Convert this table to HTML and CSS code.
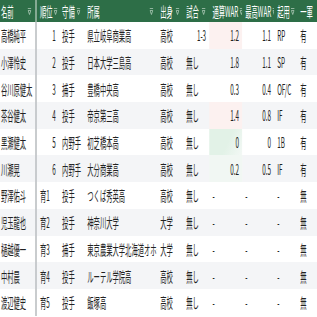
FILE: index.html
```html
<!DOCTYPE html>
<html lang="ja">
<head>
<meta charset="utf-8">
<link rel="stylesheet" href="styles.css">
</head>
<body>
<div class="sheet">
  <div class="row head">
    <div class="c c1">名前<svg class="f" viewBox="0 0 8 7"><path d="M0 0.5h8M1 2.5h6l-3 4z"/></svg></div>
    <div class="c">順位<svg class="f" viewBox="0 0 8 7"><path d="M0 0.5h8M1 2.5h6l-3 4z"/></svg></div>
    <div class="c">守備<svg class="f" viewBox="0 0 8 7"><path d="M0 0.5h8M1 2.5h6l-3 4z"/></svg></div>
    <div class="c">所属<svg class="f" viewBox="0 0 8 7"><path d="M0 0.5h8M1 2.5h6l-3 4z"/></svg></div>
    <div class="c">出身<svg class="f" viewBox="0 0 8 7"><path d="M0 0.5h8M1 2.5h6l-3 4z"/></svg></div>
    <div class="c">試合<svg class="f" viewBox="0 0 8 7"><path d="M0 0.5h8M1 2.5h6l-3 4z"/></svg></div>
    <div class="c">通算WAR<svg class="f" viewBox="0 0 8 7"><path d="M0 0.5h8M1 2.5h6l-3 4z"/></svg></div>
    <div class="c">最高WAR<svg class="f" viewBox="0 0 8 7"><path d="M0 0.5h8M1 2.5h6l-3 4z"/></svg></div>
    <div class="c">起用<svg class="f" viewBox="0 0 8 7"><path d="M0 0.5h8M1 2.5h6l-3 4z"/></svg></div>
    <div class="c">一軍</div>
  </div>

  <div class="row">
    <div class="c c1">高橋純平</div><div class="c n">1</div><div class="c">投手</div><div class="c">県立岐阜商業高</div><div class="c">高校</div><div class="c n">1-3</div><div class="c n war-p">1.2</div><div class="c n">1.1</div><div class="c">RP</div><div class="c">有</div>
  </div>
  <div class="row alt">
    <div class="c c1">小澤怜史</div><div class="c n">2</div><div class="c">投手</div><div class="c">日本大学三島高</div><div class="c">高校</div><div class="c">無し</div><div class="c n">1.8</div><div class="c n">1.1</div><div class="c">SP</div><div class="c">有</div>
  </div>
  <div class="row">
    <div class="c c1">谷川原健太</div><div class="c n">3</div><div class="c">捕手</div><div class="c">豊橋中央高</div><div class="c">高校</div><div class="c">無し</div><div class="c n">0.3</div><div class="c n">0.4</div><div class="c">OF/C</div><div class="c">有</div>
  </div>
  <div class="row alt">
    <div class="c c1">茶谷健太</div><div class="c n">4</div><div class="c">投手</div><div class="c">帝京第三高</div><div class="c">高校</div><div class="c">無し</div><div class="c n war-p">1.4</div><div class="c n">0.8</div><div class="c">IF</div><div class="c">有</div>
  </div>
  <div class="row">
    <div class="c c1">黒瀬健太</div><div class="c n">5</div><div class="c">内野手</div><div class="c">初芝橋本高</div><div class="c">高校</div><div class="c">無し</div><div class="c n war-g">0</div><div class="c n">0</div><div class="c">1B</div><div class="c">有</div>
  </div>
  <div class="row alt">
    <div class="c c1">川瀬晃</div><div class="c n">6</div><div class="c">内野手</div><div class="c">大分商業高</div><div class="c">高校</div><div class="c">無し</div><div class="c n war-l">0.2</div><div class="c n">0.5</div><div class="c">IF</div><div class="c">有</div>
  </div>
  <div class="row">
    <div class="c c1">野澤佑斗</div><div class="c">育1</div><div class="c">投手</div><div class="c">つくば秀英高</div><div class="c">高校</div><div class="c">無し</div><div class="c">-</div><div class="c">-</div><div class="c">-</div><div class="c">無</div>
  </div>
  <div class="row alt">
    <div class="c c1">児玉龍也</div><div class="c">育2</div><div class="c">投手</div><div class="c">神奈川大学</div><div class="c">大学</div><div class="c">無し</div><div class="c">-</div><div class="c">-</div><div class="c">-</div><div class="c">無</div>
  </div>
  <div class="row">
    <div class="c c1">樋越優一</div><div class="c">育3</div><div class="c">捕手</div><div class="c">東京農業大学北海道オホーツク</div><div class="c">大学</div><div class="c">無し</div><div class="c">-</div><div class="c">-</div><div class="c">-</div><div class="c">無</div>
  </div>
  <div class="row alt">
    <div class="c c1">中村晨</div><div class="c">育4</div><div class="c">投手</div><div class="c">ルーテル学院高</div><div class="c">高校</div><div class="c">無し</div><div class="c">-</div><div class="c">-</div><div class="c">-</div><div class="c">無</div>
  </div>
  <div class="row">
    <div class="c c1">渡辺健史</div><div class="c">育5</div><div class="c">投手</div><div class="c">飯塚高</div><div class="c">高校</div><div class="c">無し</div><div class="c">-</div><div class="c">-</div><div class="c">-</div><div class="c">無</div>
  </div>
</div>
</body>
</html>
```

FILE: styles.css
```css
html, body {
  margin: 0;
  padding: 0;
  background: #ffffff;
  overflow: hidden;
}
.sheet {
  width: 705px;
  transform: scaleX(0.45);
  transform-origin: 0 0;
  font-family: "Noto Sans CJK JP", "Noto Sans", sans-serif;
  font-size: 14px;
  color: #222222;
}
.row {
  display: grid;
  grid-template-columns: 82px 49px 56px 162px 58px 58px 73px 71px 51px 45px;
  height: 26.7px;
  background: #ffffff;
}
.row.alt {
  background: #f4f5f7;
}
.row.head {
  height: 22px;
  background: #2d6e47;
  color: #ffffff;
}
.c {
  display: flex;
  align-items: center;
  padding: 0 0 0 7px;
  white-space: nowrap;
  overflow: hidden;
  min-width: 0;
}
.c.n {
  justify-content: flex-end;
  padding: 0 7px 0 0;
}
.c1 {
  padding-left: 2px;
  border-right: 4px solid #c4c7c9;
}
.head .c1 {
  border-right-color: #8fb19c;
}
.head .c {
  justify-content: space-between;
  padding-right: 8px;
}
.f {
  width: 9px;
  height: 7px;
  flex: none;
  margin-left: 2px;
  fill: none;
  stroke: #b9d1c1;
  stroke-width: 1;
}
.f path {
  fill: none;
}
.war-p {
  background: #fcf1f0;
}
.war-g {
  background: linear-gradient(135deg, #e2f2e7 55%, #f3f8f5 100%);
}
.war-l {
  background: #f1f7f3;
}
```
